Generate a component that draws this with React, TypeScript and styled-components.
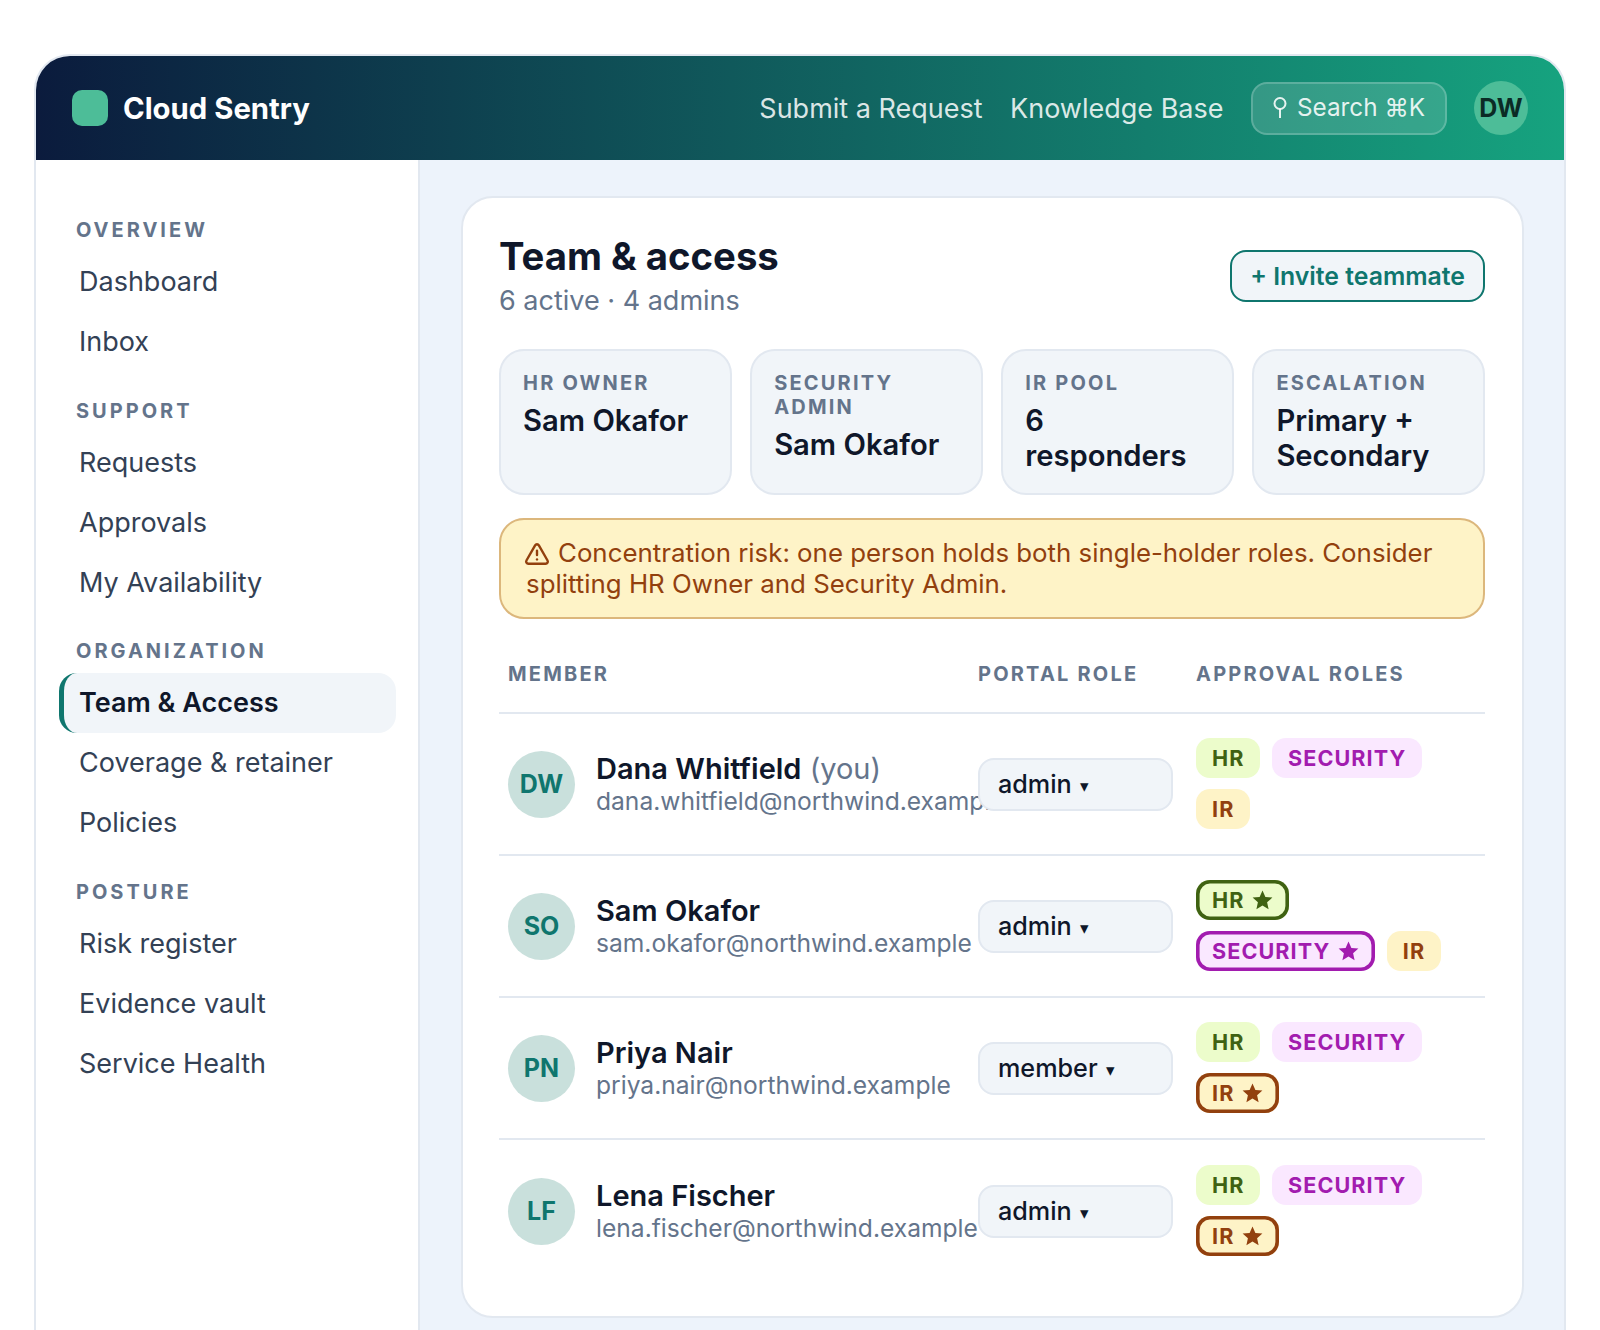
import styled, { createGlobalStyle } from 'styled-components';
import { TriangleAlert } from 'lucide-react';

const GlobalStyle = createGlobalStyle`
  html, body {
    margin: 0;
    height: 1330px;
    overflow: hidden;
    background: #fff;
    font-family: Inter, 'Noto Sans', sans-serif;
    color: #0f172a;
  }
  * { box-sizing: border-box; }
`;

const Shell = styled.div`
  margin: 54px 34px 0 34px;
  height: 1340px;
  border: 2px solid #e2e8f0;
  border-radius: 36px 36px 0 0;
  overflow: hidden;
  display: flex;
  flex-direction: column;
`;

const Header = styled.header`
  height: 104px;
  flex: none;
  display: flex;
  align-items: center;
  padding: 0 36px;
  background: linear-gradient(90deg, #0b1b3d, #16a37f);
  color: #fff;
`;

const Logo = styled.div`
  width: 36px;
  height: 36px;
  border-radius: 10px;
  background: #4dbd98;
  margin-right: 15px;
`;

const Brand = styled.div`
  font-size: 29.3px;
  font-weight: 700;
  margin-right: auto;
`;

const TopLink = styled.a`
  font-size: 27px;
  color: rgba(255, 255, 255, 0.86);
  margin-right: 27.5px;
`;

const SearchBox = styled.div`
  width: 196px;
  height: 53px;
  padding-bottom: 2px;
  display: flex;
  align-items: center;
  justify-content: center;
  gap: 10px;
  border: 2px solid rgba(255, 255, 255, 0.2);
  border-radius: 16px;
  background: rgba(255, 255, 255, 0.14);
  font-size: 24.3px;
  color: rgba(255, 255, 255, 0.88);
  margin-right: 27px;
`;

const UserBadge = styled.div`
  width: 54px;
  height: 54px;
  border-radius: 50%;
  background: #4dbd98;
  color: #0b2b25;
  font-size: 25px;
  font-weight: 700;
  display: flex;
  align-items: center;
  justify-content: center;
`;

const Body = styled.div`
  flex: 1;
  display: flex;
  min-height: 0;
`;

const Sidebar = styled.aside`
  width: 384px;
  flex: none;
  padding: 58px 22px 0 23px;
  border-right: 2px solid #e2e8f0;
  background: #fff;
`;

const NavGroup = styled.div`
  margin-bottom: 27.2px;
`;

const NavLabel = styled.div`
  font-size: 20px;
  line-height: 24px;
  font-weight: 700;
  letter-spacing: 3px;
  color: #64748b;
  padding-left: 17px;
  margin-bottom: 9.5px;
`;

const NavItem = styled.a<{ $active?: boolean }>`
  display: flex;
  align-items: center;
  height: 60px;
  font-size: 27px;
  padding-left: 20px;
  color: #334155;
  ${p => p.$active && `
    padding-left: 15px;
    background: #f1f5f9;
    border-left: 5px solid #0f766e;
    border-radius: 18px;
    color: #0f172a;
    font-weight: 600;
  `}
`;

const Main = styled.main`
  flex: 1;
  padding: 36px 40px 0 41px;
  background: #edf3fb;
`;

const Card = styled.section`
  height: 1122px;
  padding: 36px 37px 0 36px;
  background: #fff;
  border: 2px solid #e2e8f0;
  border-radius: 32px;
`;

const CardHead = styled.div`
  display: flex;
  align-items: flex-start;
  justify-content: space-between;
`;

const Title = styled.h1`
  margin: 0;
  font-size: 38.3px;
  line-height: 45px;
  font-weight: 700;
  color: #0f172a;
`;

const Sub = styled.div`
  margin-top: 2px;
  font-size: 27px;
  line-height: 40px;
  color: #64748b;
`;

const InviteButton = styled.button`
  margin-top: 16px;
  height: 52px;
  padding: 0 18px;
  border: 2px solid #0f766e;
  border-radius: 16px;
  background: #f1f5f9;
  color: #0f766e;
  font: 600 24.8px Inter, sans-serif;
`;

const Stats = styled.div`
  display: grid;
  grid-template-columns: repeat(4, 1fr);
  gap: 18.5px;
  margin-top: 28px;
`;

const Stat = styled.div`
  height: 146px;
  padding: 20px 22px;
  background: #f1f5f9;
  border: 2px solid #e2e8f0;
  border-radius: 25px;
`;

const StatLabel = styled.div`
  font-size: 20px;
  line-height: 24px;
  font-weight: 700;
  letter-spacing: 2.2px;
  color: #64748b;
`;

const StatValue = styled.div`
  font-size: 29.2px;
  line-height: 35px;
  font-weight: 600;
  margin-top: 8px;
  color: #0f172a;
`;

const Alert = styled.div`
  margin-top: 23px;
  height: 101px;
  padding: 18px 25px;
  background: #fef3c7;
  border: 2px solid #dcb77c;
  border-radius: 25px;
  color: #92400e;
  font-size: 25.85px;
  line-height: 30.6px;
`;

const AlertIcon = styled(TriangleAlert)`
  display: inline-block;
  vertical-align: -5px;
  margin: 0 8px 0 -2px;
`;

const Table = styled.div`
  margin-top: 23px;
`;

const Row = styled.div<{ $head?: boolean; $last?: boolean }>`
  display: grid;
  grid-template-columns: 470px 218px 1fr;
  align-items: center;
  height: ${p => (p.$head ? '72px' : '142px')};
  border-bottom: ${p => (p.$last ? 'none' : '2px solid #e2e8f0')};
`;

const HeadCell = styled.div`
  padding: 0 9px 6px;
  font-size: 20px;
  font-weight: 700;
  letter-spacing: 2.2px;
  color: #64748b;
`;

const MemberCell = styled.div`
  padding-left: 9px;
  display: flex;
  align-items: center;
  gap: 21px;
  min-width: 0;
`;

const Avatar = styled.div`
  width: 67px;
  height: 67px;
  flex: none;
  border-radius: 50%;
  background: #c9e0dc;
  color: #0f766e;
  font-size: 25px;
  font-weight: 700;
  display: flex;
  align-items: center;
  justify-content: center;
`;

const MemberText = styled.div`
  margin-top: -2px;
`;

const Name = styled.div`
  font-size: 29px;
  line-height: 35px;
  font-weight: 600;
  white-space: nowrap;
`;

const You = styled.span`
  font-weight: 400;
  color: #64748b;
`;

const Email = styled.div`
  font-size: 24.6px;
  line-height: 30px;
  color: #64748b;
  white-space: nowrap;
`;

const SelectCell = styled.div`
  padding: 0 9px;
  position: relative;
`;

const RoleSelect = styled.div`
  width: 195px;
  height: 53px;
  padding-left: 18px;
  display: flex;
  align-items: center;
  gap: 8px;
  background: #f1f5f9;
  border: 2px solid #e2e8f0;
  border-radius: 16px;
  font-size: 25.2px;
  font-weight: 500;
`;

const Caret = styled.span`
  font-size: 17px;
  margin-top: 3px;
`;

const RolesCell = styled.div`
  padding: 0 9px;
  margin-top: -2px;
  display: flex;
  flex-wrap: wrap;
  gap: 11px 11.5px;
`;

const chipColors = {
  hr: { bg: '#ecfccb', fg: '#3f6212' },
  security: { bg: '#fae8ff', fg: '#a21caf' },
  ir: { bg: '#fef3c7', fg: '#92400e' },
};

type Kind = keyof typeof chipColors;

const Chip = styled.span<{ $kind: Kind; $primary?: boolean }>`
  height: 40px;
  display: inline-flex;
  align-items: center;
  gap: 8px;
  padding: 0 16px;
  border-radius: 14px;
  font-size: 21.6px;
  font-weight: 700;
  letter-spacing: 1.08px;
  background: ${p => chipColors[p.$kind].bg};
  color: ${p => chipColors[p.$kind].fg};
  box-shadow: ${p => (p.$primary ? `inset 0 0 0 3.6px ${chipColors[p.$kind].fg}` : 'none')};
`;

function PinIcon() {
  return (
    <svg width="14" height="23" viewBox="0 0 14 23" fill="none" stroke="currentColor" strokeWidth="2">
      <circle cx="7" cy="7.5" r="5.5" />
      <path d="M7 13v9" />
    </svg>
  );
}

function StarIcon() {
  return (
    <svg width="21" height="20" viewBox="0 0 21 20" fill="currentColor">
      <path d="M10.5 0.5 13.4 6.9 20.4 7.6 15.1 12.3 16.6 19.2 10.5 15.6 4.4 19.2 5.9 12.3 0.6 7.6 7.6 6.9Z" />
    </svg>
  );
}

const nav = [
  { label: 'OVERVIEW', items: ['Dashboard', 'Inbox'] },
  { label: 'SUPPORT', items: ['Requests', 'Approvals', 'My Availability'] },
  { label: 'ORGANIZATION', items: ['Team & Access', 'Coverage & retainer', 'Policies'] },
  { label: 'POSTURE', items: ['Risk register', 'Evidence vault', 'Service Health'] },
];

const stats = [
  { label: 'HR OWNER', value: 'Sam Okafor' },
  { label: 'SECURITY ADMIN', value: 'Sam Okafor' },
  { label: 'IR POOL', value: '6 responders' },
  { label: 'ESCALATION', value: 'Primary + Secondary' },
];

const kinds: Kind[] = ['hr', 'security', 'ir'];

const members: {
  initials: string;
  name: string;
  you?: boolean;
  email: string;
  role: string;
  primary?: Kind[];
}[] = [
  { initials: 'DW', name: 'Dana Whitfield', you: true, email: 'dana.whitfield@northwind.example', role: 'admin' },
  { initials: 'SO', name: 'Sam Okafor', email: 'sam.okafor@northwind.example', role: 'admin', primary: ['hr', 'security'] },
  { initials: 'PN', name: 'Priya Nair', email: 'priya.nair@northwind.example', role: 'member', primary: ['ir'] },
  { initials: 'LF', name: 'Lena Fischer', email: 'lena.fischer@northwind.example', role: 'admin', primary: ['ir'] },
];

export default function App() {
  return (
    <>
      <GlobalStyle />
      <Shell>
        <Header>
          <Logo />
          <Brand>Cloud Sentry</Brand>
          <TopLink>Submit a Request</TopLink>
          <TopLink>Knowledge Base</TopLink>
          <SearchBox><PinIcon /><span>Search ⌘K</span></SearchBox>
          <UserBadge>DW</UserBadge>
        </Header>
        <Body>
          <Sidebar>
            {nav.map(group => (
              <NavGroup key={group.label}>
                <NavLabel>{group.label}</NavLabel>
                {group.items.map(item => (
                  <NavItem key={item} $active={item === 'Team & Access'}>{item}</NavItem>
                ))}
              </NavGroup>
            ))}
          </Sidebar>
          <Main>
            <Card>
              <CardHead>
                <div>
                  <Title>Team &amp; access</Title>
                  <Sub>6 active · 4 admins</Sub>
                </div>
                <InviteButton>+ Invite teammate</InviteButton>
              </CardHead>
              <Stats>
                {stats.map(s => (
                  <Stat key={s.label}>
                    <StatLabel>{s.label}</StatLabel>
                    <StatValue>{s.value}</StatValue>
                  </Stat>
                ))}
              </Stats>
              <Alert>
                <AlertIcon size={26} strokeWidth={2.2} />
                Concentration risk: one person holds both single-holder roles. Consider splitting HR Owner and Security Admin.
              </Alert>
              <Table>
                <Row $head>
                  <HeadCell>MEMBER</HeadCell>
                  <HeadCell>PORTAL ROLE</HeadCell>
                  <HeadCell>APPROVAL ROLES</HeadCell>
                </Row>
                {members.map((m, i) => (
                  <Row key={m.email} $last={i === members.length - 1}>
                    <MemberCell>
                      <Avatar>{m.initials}</Avatar>
                      <MemberText>
                        <Name>{m.name}{m.you && <You> (you)</You>}</Name>
                        <Email>{m.email}</Email>
                      </MemberText>
                    </MemberCell>
                    <SelectCell>
                      <RoleSelect>{m.role} <Caret>▾</Caret></RoleSelect>
                    </SelectCell>
                    <RolesCell>
                      {kinds.map(kind => {
                        const primary = m.primary?.includes(kind);
                        return (
                          <Chip key={kind} $kind={kind} $primary={primary}>
                            {kind.toUpperCase()}{primary && <StarIcon />}
                          </Chip>
                        );
                      })}
                    </RolesCell>
                  </Row>
                ))}
              </Table>
            </Card>
          </Main>
        </Body>
      </Shell>
    </>
  );
}
